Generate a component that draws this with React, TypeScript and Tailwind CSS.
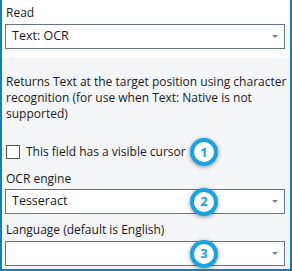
function Badge({ n }: { n: number }) {
  return (
    <div className="absolute left-[185px] top-1/2 -translate-y-1/2 w-[28px] h-[28px] rounded-full border-[4px] border-[#1ba3e0] bg-white shadow-[0_1px_4px_rgba(0,0,0,0.4)] flex items-center justify-center text-[#1ba3e0] text-[13px] font-bold leading-none">
      {n}
    </div>
  )
}

function Select({ value, badge }: { value?: string; badge?: number }) {
  return (
    <div className="relative">
      <div className="h-[25px] w-[280px] border border-[#66758f] bg-white flex items-center justify-between pl-[6px] pr-[6px] text-[12.5px] text-[#1b1b1b]">
        <span>{value}</span>
        <span className="w-0 h-0 border-x-[3px] border-x-transparent border-t-[3px] border-t-[#7a8494]" />
      </div>
      {badge && <Badge n={badge} />}
    </div>
  )
}

export default function App() {
  return (
    <div className="w-[292px] h-[271px] border-x-2 border-b-2 border-[#0c80c2] bg-[#f4f5f7] text-[#1b1b1b] font-['Open_Sans',sans-serif] overflow-hidden">
      <div className="bg-white px-[3px] pt-[3px] pb-[9px]">
        <div className="text-[12px] leading-[20px] mb-[1px] pl-[1px]">Read</div>
        <Select value="Text: OCR" />
      </div>

      <div className="px-[3px] pt-4">
        <p className="text-[12px] leading-[16px] pl-[1px]">
          Returns Text at the target position using character recognition (for use when Text: Native is not supported)
        </p>

        <div className="relative mt-[22px] flex items-center gap-[6px] h-[16px] pl-[1px]">
          <span className="w-[14px] h-[14px] border border-[#555] bg-white" />
          <span className="text-[12px]">This field has a visible cursor</span>
          <Badge n={1} />
        </div>

        <div className="text-[12px] leading-[20px] mt-[9px] pl-[1px]">OCR engine</div>
        <Select value="Tesseract" badge={2} />

        <div className="text-[12px] leading-[20px] mt-[6px] mb-[1px] pl-[1px]">Language (default is English)</div>
        <Select badge={3} />
      </div>
    </div>
  )
}
